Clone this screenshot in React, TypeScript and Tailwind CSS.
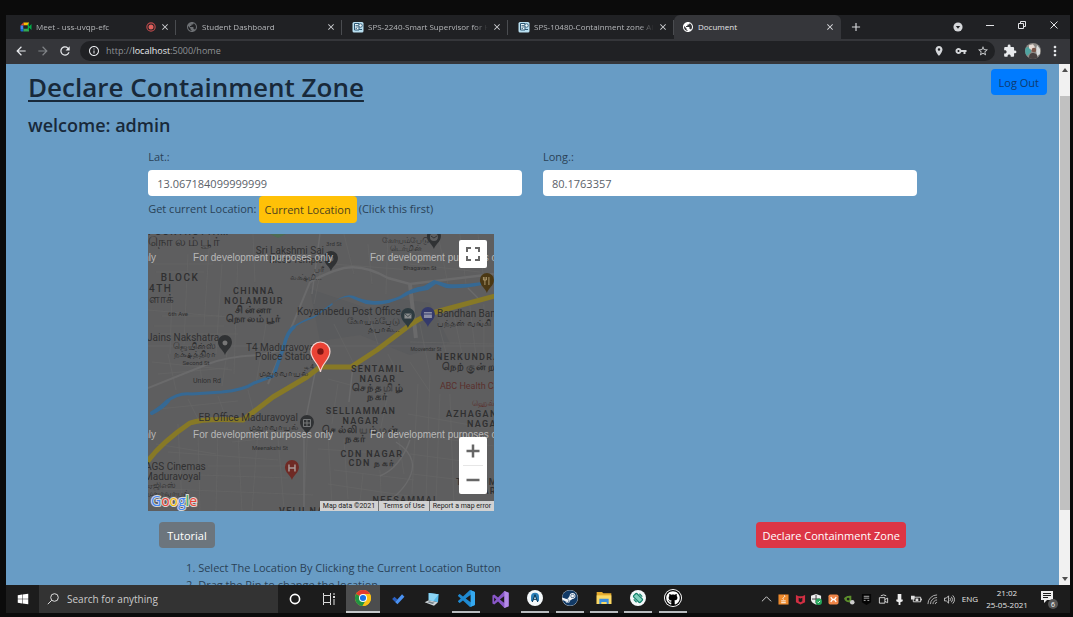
import React from "react";
import {
  MdAdd,
  MdArrowBack,
  MdArrowForward,
  MdClose,
  MdExtension,
  MdInfoOutline,
  MdLocationOn,
  MdMoreVert,
  MdPublic,
  MdRefresh,
  MdStarBorder,
  MdVpnKey,
} from "react-icons/md";
import { FaGithub, FaSteam, FaWindows } from "react-icons/fa";

/* ---------- Browser chrome ---------- */

function MeetIcon() {
  return (
    <svg viewBox="0 0 24 24" className="size-3 shrink-0">
      <path d="M7 3h11v6H7z" fill="#fbbc04" />
      <path d="M1 9l6-6v6z" fill="#ea4335" />
      <path d="M1 9h6v7H1z" fill="#4285f4" />
      <path d="M1 16h6v5H3a2 2 0 0 1-2-2z" fill="#1967d2" />
      <path d="M7 15h11v6H7z" fill="#34a853" />
      <path d="M17 4l1 1v14l-3-2V8zM17 12l6-6v12z" fill="#00ac47" />
      <path d="M7 9h8v6H7z" fill="#202124" />
    </svg>
  );
}

function DocIcon() {
  return (
    <svg viewBox="0 0 24 24" className="size-3 shrink-0">
      <rect x="1" y="2" width="22" height="21" rx="3" fill="#b9dff0" />
      <path d="M5 5h9v13H5z" fill="#eef8fc" stroke="#2d5874" strokeWidth="2" />
      <path d="M7 9h5M7 12h6M7 15h3" stroke="#2d5874" strokeWidth="1.6" />
      <circle cx="17" cy="9" r="3.5" fill="#eef8fc" stroke="#2d5874" strokeWidth="1.8" />
      <path d="M14 17h6" stroke="#2d5874" strokeWidth="2" />
    </svg>
  );
}

type TabInfo = { title: string; icon: React.ReactNode; recording?: boolean };

const tabs: TabInfo[] = [
  { title: "Meet - uss-uvqp-efc", icon: <MeetIcon />, recording: true },
  { title: "Student Dashboard", icon: <MdPublic className="size-3 shrink-0 text-[#6d7074]" /> },
  { title: "SPS-2240-Smart Supervisor for H", icon: <DocIcon /> },
  { title: "SPS-10480-Containment zone Al", icon: <DocIcon /> },
];

function TabStrip() {
  return (
    <div className="flex h-6 items-stretch bg-[#202124] text-[8px] text-[#b4b6b9]">
      <div className="w-1" />
      {tabs.map((t) => (
        <div
          key={t.title}
          className="flex min-w-0 flex-[0_1_166px] items-center gap-1 bg-[linear-gradient(#4a4c50,#4a4c50)] bg-[length:1px_15px] bg-[position:right_center] bg-no-repeat pr-1.5 pl-2.5"
        >
          {t.icon}
          <button className="min-w-0 flex-1 overflow-hidden text-left whitespace-nowrap [mask-image:linear-gradient(to_right,black_88%,transparent)]">
            {t.title}
          </button>
          {t.recording && (
            <svg viewBox="0 0 12 12" className="size-2.5 shrink-0">
              <circle cx="6" cy="6" r="5" fill="none" stroke="#b8484a" strokeWidth="1.4" />
              <circle cx="6" cy="6" r="3" fill="#e0605c" />
            </svg>
          )}
          <button aria-label="Close tab" className="shrink-0 text-[#d5d7da]">
            <MdClose className="size-2.5" />
          </button>
        </div>
      ))}
      <div className="flex min-w-0 flex-[0_1_167px] items-center gap-1 rounded-t-md bg-[#35363a] pr-1.5 pl-2 text-[#e2e3e6]">
        <MdPublic className="size-3 shrink-0 text-white" />
        <button className="min-w-0 flex-1 text-left whitespace-nowrap">Document</button>
        <button aria-label="Close tab" className="shrink-0">
          <MdClose className="size-2.5" />
        </button>
      </div>
      <button aria-label="New tab" className="ml-2 text-[#d5d7da]">
        <MdAdd className="size-3.5" />
      </button>
      <div className="ml-auto flex items-center text-[#e2e3e6]">
        <button aria-label="Search tabs" className="flex w-8 justify-center">
          <svg viewBox="0 0 12 12" className="size-2.5">
            <circle cx="6" cy="6" r="5.5" fill="#d5d7da" />
            <path d="M3.4 4.8h5.2L6 8z" fill="#202124" />
          </svg>
        </button>
        <button aria-label="Minimize" className="flex w-8 justify-center pb-1">
          <svg viewBox="0 0 10 10" className="size-2.5">
            <path d="M1 5.5h8" stroke="currentColor" />
          </svg>
        </button>
        <button aria-label="Restore" className="flex w-8 justify-center pb-1">
          <svg viewBox="0 0 10 10" className="size-2.5" fill="none" stroke="currentColor">
            <path d="M1.5 3.5h5v5h-5z M3.5 3V1.5h5v5H7" />
          </svg>
        </button>
        <button aria-label="Close window" className="flex w-8 justify-center pb-1">
          <svg viewBox="0 0 10 10" className="size-2.5" stroke="currentColor">
            <path d="M1.5 1.5l7 7M8.5 1.5l-7 7" />
          </svg>
        </button>
      </div>
    </div>
  );
}

function Toolbar() {
  return (
    <div className="flex h-[25px] items-center bg-[#35363a] pb-0.5 text-[#e8eaed]">
      <button aria-label="Back" className="ml-2">
        <MdArrowBack className="size-3.5" />
      </button>
      <button aria-label="Forward" className="ml-2 text-[#808387]">
        <MdArrowForward className="size-3.5" />
      </button>
      <button aria-label="Reload" className="ml-2">
        <MdRefresh className="size-3.5" />
      </button>
      <div className="ml-2 flex h-5 flex-1 items-center rounded-full bg-[#202124] pr-1.5 pl-2">
        <MdInfoOutline className="size-3" />
        <div
          role="textbox"
          aria-label="Address"
          className="ml-1.5 flex-1 text-[9px] text-[#8f9296]"
        >
          http://<span className="text-[#e8eaed]">localhost</span>:5000/home
        </div>
        <div className="flex items-center gap-2.5 text-[#d5d7da]">
          <MdLocationOn className="size-3" />
          <MdVpnKey className="size-3" />
          <MdStarBorder className="size-3" />
        </div>
      </div>
      <button aria-label="Extensions" className="ml-2">
        <MdExtension className="size-3.5" />
      </button>
      <button aria-label="Profile" className="ml-2">
        <svg viewBox="0 0 16 16" className="size-4">
          <circle cx="8" cy="8" r="8" fill="#8d8a86" />
          <path d="M1 4.5A8 8 0 0 0 2 13l4-4-1-5z" fill="#4fa3a0" />
          <path d="M4 2.200l4-1 2 3-3 3-3-2z" fill="#e9dcd4" />
          <path d="M12 2l3 4v5l-3 2-1-6z" fill="#d9dcdc" />
          <circle cx="9" cy="7" r="2.300" fill="#7a5548" />
          <path d="M4 15c0-4 2-5 4-5s5 1 4 5c-3 1.500-6 1-8 0z" fill="#47403f" />
        </svg>
      </button>
      <button aria-label="Menu" className="mr-[7px] ml-1.5">
        <MdMoreVert className="size-4" />
      </button>
    </div>
  );
}

function Scrollbar() {
  return (
    <div className="flex w-[11px] shrink-0 flex-col items-center bg-[#f1f1f1] py-1 text-[#505050]">
      <svg viewBox="0 0 6 4" className="h-1 w-1.5">
        <path d="M0 4l3-4 3 4z" fill="currentColor" />
      </svg>
      <div className="mt-6 w-2.5 flex-[412] bg-[#c1c1c1]" />
      <div className="flex-[67]" />
      <svg viewBox="0 0 6 4" className="h-1 w-1.5">
        <path d="M0 0l3 4 3-4z" fill="currentColor" />
      </svg>
    </div>
  );
}

/* ---------- Map ---------- */

type Label = { x: number; y: number; t: string; s?: number; a?: "start" | "end"; c?: string; w?: number; caps?: boolean };

const labels: Label[] = [
  { x: 0, y: 1, t: "POONTHOTTAM", s: 9, a: "start", w: 500, caps: true },
  { x: 0, y: 12, t: "நொலம்பூர்", s: 13, a: "start", w: 500, caps: true },
  { x: 142, y: 20, t: "Sri Lakshmi Sai", s: 10 },
  { x: 148, y: 29, t: "Bless Temple", s: 9 },
  { x: 176, y: 38, t: "பரீ", s: 8, a: "end" },
  { x: 174, y: 46, t: "லக்ஷ்மி...", s: 8, a: "end" },
  { x: 32, y: 47, t: "BLOCK", s: 10, w: 500, caps: true },
  { x: 1, y: 58, t: "4TH", s: 10, a: "start", w: 500, caps: true },
  { x: 1, y: 69, t: "ளாக்", s: 12, a: "start", w: 500 },
  { x: 106, y: 60, t: "CHINNA", s: 9, w: 600, caps: true },
  { x: 106, y: 70, t: "NOLAMBUR", s: 9, w: 600, caps: true },
  { x: 106, y: 79, t: "சின்னா", s: 10, w: 600, caps: true },
  { x: 106, y: 88, t: "நொலம்பூர்", s: 10, w: 600, caps: true },
  { x: 30, y: 82, t: "6th Ave", s: 6 },
  { x: 201, y: 81, t: "Koyambedu Post Office", s: 10 },
  { x: 252, y: 90, t: "கோயம்பேடு", s: 9, a: "end" },
  { x: 252, y: 98, t: "தபால்...", s: 9, a: "end" },
  { x: 289, y: 83, t: "Bandhan Bank", s: 10, a: "start" },
  { x: 289, y: 92, t: "பந்தன் வங்கி", s: 9, a: "start" },
  { x: -1, y: 107, t: "Jains Nakshatra", s: 10, a: "start" },
  { x: 68, y: 115, t: "ஜெயின்ஸ்", s: 9, a: "end" },
  { x: 68, y: 123, t: "நக்ஷத்திரா", s: 9, a: "end" },
  { x: 48, y: 131, t: "Second St", s: 6 },
  { x: 98, y: 117, t: "T4 Maduravoyal", s: 10, a: "start" },
  { x: 107, y: 126, t: "Police Station", s: 10, a: "start" },
  { x: 166, y: 135, t: "டி4", s: 7, a: "end" },
  { x: 160, y: 142, t: "மதுரவாயல்", s: 9, a: "end" },
  { x: 59, y: 149, t: "Union Rd", s: 7 },
  { x: 258, y: 9, t: "கோயம்பேடு", s: 8 },
  { x: 258, y: 17, t: "டெர்மின்", s: 8 },
  { x: 186, y: 12, t: "3rd St", s: 6 },
  { x: 272, y: 36, t: "Bhagavan St", s: 6 },
  { x: 278, y: 117, t: "Moovendar St", s: 5 },
  { x: 288, y: 126, t: "NERKUNDRAM", s: 9, a: "start", w: 600, caps: true },
  { x: 294, y: 136, t: "நெற்குன்றம்", s: 10, a: "start", w: 600, caps: true },
  { x: 230, y: 138, t: "SENTAMIL", s: 9, w: 600, caps: true },
  { x: 230, y: 148, t: "NAGAR", s: 9, w: 600, caps: true },
  { x: 230, y: 157, t: "செந்தமிழ்", s: 10, w: 600, caps: true },
  { x: 230, y: 166, t: "நகர்", s: 10, w: 600, caps: true },
  { x: 292, y: 155, t: "ABC Health Care", s: 9, a: "start", c: "#5a302d" },
  { x: 324, y: 172, t: "ஹெல்த்", s: 8, a: "start", c: "#5a302d" },
  { x: 213, y: 180, t: "SELLIAMMAN", s: 9, w: 600, caps: true },
  { x: 213, y: 190, t: "NAGAR", s: 9, w: 600, caps: true },
  { x: 213, y: 199, t: "செல்லியம்மன்", s: 10, w: 600, caps: true },
  { x: 208, y: 208, t: "நகர்", s: 10, w: 600, caps: true },
  { x: 298, y: 183, t: "AZHAGANAR", s: 9, a: "start", w: 600, caps: true },
  { x: 319, y: 193, t: "NAGAR", s: 9, a: "start", w: 600, caps: true },
  { x: 150, y: 187, t: "EB Office Maduravoyal", s: 10, a: "end" },
  { x: 150, y: 196, t: "மதுரவாயல்", s: 9, a: "end" },
  { x: 122, y: 216, t: "Meenakshi St", s: 6 },
  { x: 224, y: 223, t: "CDN NAGAR", s: 9, w: 600, caps: true },
  { x: 224, y: 232, t: "CDN நகர்", s: 9, w: 600, caps: true },
  { x: -3, y: 236, t: "AGS Cinemas", s: 10, a: "start" },
  { x: -4, y: 246, t: "Maduravoyal", s: 10, a: "start" },
  { x: -1, y: 254, t: "ஏஜிஎஸ்", s: 8, a: "start" },
  { x: -1, y: 262, t: "மதுரவாயல்", s: 8, a: "start" },
  { x: 308, y: 251, t: "THIRUMAL", s: 9, a: "start", w: 600, caps: true },
  { x: 312, y: 260, t: "NAGAR", s: 9, a: "start", w: 600, caps: true },
  { x: 258, y: 269, t: "NEESAMMAL", s: 9, w: 500, caps: true },
  { x: 131, y: 280, t: "VELU NAGAR", s: 9, a: "start", w: 600, caps: true },
];

const riverUpper =
  "M180 73Q190 63 201 63Q210 67 218 70Q230 72 241 69Q252 66 262 60Q272 57 280 56L288 50L298 54Q315 55 334 51V48Q315 51 300 50L286 46L276 52Q262 54 252 62Q242 67 226 67Q214 66 206 62Q196 58 180 73Z";

function Pin({ x, y, fill, children }: { x: number; y: number; fill: string; children?: React.ReactNode }) {
  return (
    <g transform={`translate(${x} ${y})`}>
      <path d="M0 12C-1.500 7-7 5-7-1a7 7 0 0 1 14 0C7 5 1.500 7 0 12z" fill={fill} />
      {children}
    </g>
  );
}

function MapCanvas() {
  return (
    <svg viewBox="0 0 346 277" className="block h-full w-full bg-[#5e5e5f] font-[Roboto,'Noto_Sans',sans-serif]">
      <path d="M122 0h16l-8 4z" fill="#4f6b52" />
      <path d="M162 55l60 20 30-10 30 4 20 40-40 12-50-20-40 6z" fill="#5a5b5d" />
      <g stroke="#656566" strokeWidth="0.7" fill="none">
        <path d="M5 30h60M8 38h48M6 92h70M10 100h80M14 82h60M0 76l92 8M62 0l-6 92M40 20l-4 90M74 30l-6 90M90 20l-4 120M24 60l-2 60M105 0l2 48M118 90l-10 60" />
        <path d="M8 210l60 10M20 218l110 8M30 190l4 80M50 198l2 79M70 196l-2 81M90 200l4 77M110 196l-6 81M20 240l120 4M15 255l150 6M84 208l60-6M160 190l-4 80M130 204l6 70M60 232h90" />
        <path d="M180 200l4 70M196 205l4 60M215 240l-4 37M232 236l2 40M250 200l6 40M180 250l80 12M170 215l60 4M186 236l80 10M270 150l-6 110M282 140l-4 130M292 160l-4 110M302 160l4 110M260 180l80 14M262 200l84 12M262 220l60 8M264 240l50 6" />
        <path d="M176 20l-10 50M196 0l10 40M220 10l4 40M240 0l-2 60M255 15l80 14M262 30l70 8M290 0l10 50M312 0l6 50M330 0l6 46M184 30l80 6M186 90l20 40M220 80l10 30M272 90l10 50M290 88l8 30M306 80l8 40M322 72l6 50M336 70v50M262 108l84 2M262 128l20 30M240 120l10 20" />
        <path d="M4 128l80 8M10 140l70-6M20 120l8 36M50 118l4 30M80 112l-6 40M10 175l80-8M40 165l10 20M70 162l8 22M100 156l6 24M180 145l60 16M190 150l-6 40M240 160l-8 38" />
      </g>
      <g stroke="#6a6a6b" fill="none">
        <path d="M0 154Q40 138 60 130T112 121L150 112" strokeWidth="2" />
        <path d="M162 48Q180 38 196 34Q216 30 240 44L262 50L346 40" strokeWidth="2.500" />
        <path d="M262 50l4 36 2 18" strokeWidth="4" />
        <path d="M162 48L144 92 120 150" strokeWidth="2" />
        <path d="M0 112H346" strokeWidth="0.600" />
        <path d="M172 0L164 60M168 134l-12 60 0 83M205 132l-4 36M262 206q-10 28-30 36M320 54l10 10" strokeWidth="1.500" />
        <path d="M248 208Q275 225 258 250T205 277" strokeWidth="1.300" />
      </g>
      <g fill="none" stroke="#366994" strokeLinecap="round" strokeLinejoin="round">
        <path d="M4 179Q14 172 18 168Q30 158 44 160L74 158Q96 156 106 149L125 142" strokeWidth="3" />
        <path d="M4 179Q14 174 20 167" strokeWidth="4" />
        <path d="M127 138L136 112Q139 98 146 93" strokeWidth="3.500" />
        <path d="M146 93Q152 88 166 83L184 70" strokeWidth="1.500" />
      </g>
      <path d={riverUpper} fill="#366994" />
      <path
        d="M-1 228Q14 208 42 189Q56 184 95 186L125 163L159 143L172 133H203L229 116L262 91Q278 80 295 76L347 62"
        fill="none"
        stroke="#877926"
        strokeWidth="5"
        strokeLinejoin="round"
      />
      <g fill="#303031">
        {labels.map((l, i) => (
          <text
            key={i}
            x={l.x}
            y={l.y}
            fontSize={l.s}
            fontWeight={l.w}
            fill={l.c}
            textAnchor={l.a ?? "middle"}
            className={l.caps ? "tracking-[0.15em]" : undefined}
          >
            {l.t}
          </text>
        ))}
      </g>
      <Pin x={183} y={25} fill="#303234">
        <circle r="2.500" fill="#5e5e5f" />
      </Pin>
      <Pin x={286} y={3} fill="#303234">
        <circle r="4" fill="#5e5e5f" />
        <path d="M-3-1l3 2 3-2" fill="none" stroke="#303234" />
      </Pin>
      <Pin x={77} y={109} fill="#303234">
        <circle r="2.500" fill="#777" />
      </Pin>
      <Pin x={260} y={82} fill="#2e3b40">
        <path d="M-3.500-2.500h7v5h-7z" fill="#8a8d8e" />
        <path d="M-3.500-2.500L0 .5l3.500-3" fill="none" stroke="#2e3b40" strokeWidth=".8" />
      </Pin>
      <Pin x={280} y={81} fill="#343a6b">
        <path d="M-4-3h8v6h-8z" fill="#8b8ea6" />
        <path d="M-4-1h8" stroke="#343a6b" />
      </Pin>
      <Pin x={339} y={47} fill="#4b3814">
        <path d="M-2-4v8M2-4v8M-3.500-4v3h3v-3" fill="none" stroke="#a9956a" />
      </Pin>
      <Pin x={159} y={189} fill="#303234">
        <path d="M-3.500-3.500h7v7h-7zM0-3.500v7M-3.500 0h7" fill="none" stroke="#77797a" />
      </Pin>
      <Pin x={144} y={234} fill="#6f2a25">
        <path d="M-3-3.500v7M3-3.500v7M-3 0h6" fill="none" stroke="#a89896" strokeWidth="1.500" />
      </Pin>
      <g fontSize="10" fill="#b8b8b8" textAnchor="middle" className="font-['Liberation_Sans',sans-serif]">
        {[27, 204].map((y) =>
          [-62, 115, 292].map((x) => (
            <text key={`${x}-${y}`} x={x} y={y}>
              For development purposes only
            </text>
          )),
        )}
      </g>
      <g transform="translate(172.500 119)">
        <path
          d="M0 19C-1.500 10-9.500 7-9.500-1.500a9.500 9.500 0 0 1 19 0C9.500 7 1.500 10 0 19z"
          fill="#ea4335"
          stroke="#f6d6d2"
          strokeWidth="1.200"
        />
        <circle cy="-1.500" r="3.200" fill="#7d1512" />
      </g>
      <text
        x="3"
        y="272"
        fontSize="14"
        fontWeight="500"
        stroke="#d8d8d8"
        strokeWidth="2"
        paintOrder="stroke"
        className="font-['Open_Sans',sans-serif]"
      >
        <tspan fill="#4285f4">G</tspan>
        <tspan fill="#ea4335">o</tspan>
        <tspan fill="#fbbc04">o</tspan>
        <tspan fill="#4285f4">g</tspan>
        <tspan fill="#34a853">l</tspan>
        <tspan fill="#ea4335">e</tspan>
      </text>
    </svg>
  );
}

function LocationMap() {
  return (
    <div className="relative mt-[11px] h-[277px] w-[45%] overflow-hidden">
      <MapCanvas />
      <button
        aria-label="Toggle fullscreen"
        className="absolute top-1.5 right-[7px] flex size-7 items-center justify-center rounded-xs bg-white"
      >
        <svg viewBox="0 0 14 14" className="size-3.5" fill="none" stroke="#666" strokeWidth="2">
          <path d="M1 5V1h4M9 1h4v4M13 9v4H9M5 13H1V9" />
        </svg>
      </button>
      <div className="absolute right-[7px] bottom-[17px] flex w-7 flex-col items-center rounded-xs bg-white">
        <button aria-label="Zoom in" className="flex h-7 w-full items-center justify-center">
          <svg viewBox="0 0 14 14" className="size-3.5" stroke="#666" strokeWidth="2.500">
            <path d="M0.500 7h13M7 .5v13" />
          </svg>
        </button>
        <div className="h-px w-5 bg-[#e6e6e6]" />
        <button aria-label="Zoom out" className="flex h-7 w-full items-center justify-center">
          <svg viewBox="0 0 14 14" className="size-3.5" stroke="#666" strokeWidth="2.500">
            <path d="M0.500 7h13" />
          </svg>
        </button>
      </div>
      <div className="absolute right-0 bottom-0 flex h-2.5 items-center divide-x divide-[#777] bg-[#d2d2d2] font-[Roboto,sans-serif] text-[7px] leading-[10px] whitespace-nowrap text-[#222]">
        <span className="px-[3px]">Map data ©2021</span>
        <a href="#terms" className="px-1">
          Terms of Use
        </a>
        <a href="#report" className="px-[3px]">
          Report a map error
        </a>
      </div>
    </div>
  );
}

/* ---------- Page ---------- */

function CoordinateField({ id, label, value }: { id: string; label: string; value: string }) {
  return (
    <div className="min-w-0 flex-1">
      <label htmlFor={id} className="mb-[5px] block">
        {label}
      </label>
      <input
        id={id}
        defaultValue={value}
        className="block h-[26px] w-full rounded-sm bg-white px-[9px] text-[#5a6169]"
      />
    </div>
  );
}

function Page() {
  return (
    <main className="min-w-0 flex-1 overflow-hidden bg-[#689cc5] text-[11px] leading-[17px] text-[#2a4257]">
      <div className="flex items-start justify-between pt-[5px] pr-3 pl-[22px] text-[#18293a]">
        <div>
          <h1 className="text-[26px] leading-9 font-semibold underline decoration-2 underline-offset-3">
            Declare Containment Zone
          </h1>
          <h2 className="mt-2 text-[18px] leading-6 font-semibold">welcome: admin</h2>
        </div>
        <button className="h-[26px] rounded-sm bg-[#007bff] px-2 text-[#0f3a70]">Log Out</button>
      </div>
      <div className="mx-auto mt-[11px] w-[73%]">
        <div className="flex gap-[21px]">
          <CoordinateField id="lat" label="Lat.:" value="13.067184099999999" />
          <CoordinateField id="long" label="Long.:" value="80.1763357" />
        </div>
        <div className="flex items-start gap-0.5">
          <span className="pt-1">Get current Location:</span>
          <button className="h-[27px] rounded-sm bg-[#ffc107] px-1.5 text-[#4d431f]">Current Location</button>
          <span className="pt-1">(Click this first)</span>
        </div>
        <LocationMap />
        <div className="mt-[11px] flex justify-between px-[11px] text-white">
          <button className="h-[26px] rounded-sm bg-[#6c757d] px-2">Tutorial</button>
          <button className="h-[26px] rounded-sm bg-[#dc3545] px-1.5">Declare Containment Zone</button>
        </div>
        <ol className="mt-[11px] list-decimal pl-[50px]">
          <li>Select The Location By Clicking the Current Location Button</li>
          <li>Drag the Pin to change the location</li>
        </ol>
      </div>
    </main>
  );
}

/* ---------- Taskbar ---------- */

const ChromeLogo = (
  <svg viewBox="0 0 24 24" className="size-4">
    <circle cx="12" cy="12" r="12" fill="#fbc116" />
    <path d="M12 12L1.600 6A12 12 0 0 1 22.400 6z" fill="#e33b2e" />
    <path d="M12 12L1.600 6A12 12 0 0 0 11 24l5.500-9z" fill="#229342" />
    <path d="M12 6h10.400A12 12 0 0 1 12 24l5-9z" fill="#fbc116" />
    <circle cx="12" cy="12" r="6" fill="#fff" />
    <circle cx="12" cy="12" r="4.600" fill="#1a73e8" />
  </svg>
);
const TodoLogo = (
  <svg viewBox="0 0 24 24" className="size-3.5">
    <path d="M2 12l4-4 5 5-4 4z" fill="#2b5fc0" />
    <path d="M7 17L19 4l4 4L11 21z" fill="#4a92f2" />
  </svg>
);
const LaptopLogo = (
  <svg viewBox="0 0 24 24" className="size-4">
    <path d="M7 3l15 2-1 12-14-3z" fill="#56b9ea" />
    <path d="M7 3l15 2-8 10-7-1z" fill="#8cd5f5" />
    <path d="M1 17l6-3 14 3-6 5z" fill="#cfd6da" />
    <path d="M5 17l3-1.500 8 2-3 2z" fill="#76838b" />
  </svg>
);
const CodeLogo = (
  <svg viewBox="0 0 24 24" className="size-[17px]">
    <path
      d="M23.150 2.587L18.210.21a1.494 1.494 0 0 0-1.705.29l-9.460 8.630-4.120-3.128a.999.999 0 0 0-1.276.057L.327 7.261A1 1 0 0 0 .326 8.740L3.899 12 .326 15.260a1 1 0 0 0 .001 1.479L1.650 17.940a.999.999 0 0 0 1.276.057l4.120-3.128 9.460 8.630a1.492 1.492 0 0 0 1.704.29l4.942-2.377A1.500 1.500 0 0 0 24 20.060V3.939a1.500 1.500 0 0 0-.85-1.352zm-5.146 14.861L10.826 12l7.178-5.448v10.896z"
      fill="#1f8ad2"
    />
    <path d="M18 .2l5.200 2.400a1.500 1.500 0 0 1 .8 1.300v16.200a1.500 1.500 0 0 1-.8 1.300L18 23.800z" fill="#35a8ee" />
  </svg>
);
const StudioLogo = (
  <svg viewBox="0 0 24 24" className="size-[17px]">
    <path
      d="M17.500 0L8.500 9.200 3.200 5 .6 6.200v11.600L3.200 19l5.300-4.200 9 9.200 6-2.500v-19zM3 15V9l3 3zm8-3l6.500-5v10z"
      fill="#8957c9"
      fillRule="evenodd"
    />
    <path d="M17.500 0l6 2.500v19l-6 2.500z" fill="#b38ae6" />
  </svg>
);
const AndroidStudioLogo = (
  <svg viewBox="0 0 24 24" className="size-4">
    <circle cx="12" cy="12" r="12" fill="#f4f8fa" />
    <path d="M6 17V10a6 6 0 0 1 12 0v7h-3l-3-8-3 8z" fill="#2b7fb8" />
    <path d="M8 18l4-11 4 11M10 14h4" fill="none" stroke="#0c3550" strokeWidth="1.500" />
  </svg>
);
const SteamLogo = (
  <span className="flex rounded-full bg-[#f2f5f8]">
    <FaSteam className="size-4 text-[#123a66]" />
  </span>
);
const ExplorerLogo = (
  <svg viewBox="0 0 24 24" className="size-4">
    <path d="M1 3h8l2 2h12v16H1z" fill="#e5ab2f" />
    <path d="M1 8h22v13H1z" fill="#fbd966" />
    <path d="M5 13h14v8h-3v-3H8v3H5z" fill="#3c8ede" />
  </svg>
);
const EmulatorLogo = (
  <svg viewBox="0 0 24 24" className="size-4">
    <circle cx="12" cy="12" r="12" fill="#f4f8fa" />
    <g transform="rotate(-45 12 12)" fill="none" stroke="#11806a" strokeWidth="1.800">
      <rect x="8.500" y="5" width="7" height="14" rx="1.500" fill="#7fd0bd" />
      <path d="M6 9v6M18 9v6" />
    </g>
  </svg>
);
const GithubLogo = (
  <span className="flex rounded-full bg-black p-px ring-1 ring-white">
    <FaGithub className="size-3.5 text-white" />
  </span>
);

const apps = [
  { name: "Chrome", logo: ChromeLogo, state: "active" },
  { name: "To Do", logo: TodoLogo, state: "idle" },
  { name: "Remote Desktop", logo: LaptopLogo, state: "idle" },
  { name: "Code", logo: CodeLogo, state: "open" },
  { name: "Visual Studio", logo: StudioLogo, state: "idle" },
  { name: "Android Studio", logo: AndroidStudioLogo, state: "open" },
  { name: "Steam", logo: SteamLogo, state: "open" },
  { name: "File Explorer", logo: ExplorerLogo, state: "open" },
  { name: "Emulator", logo: EmulatorLogo, state: "open" },
  { name: "GitHub Desktop", logo: GithubLogo, state: "open" },
];

const cell = {
  active: "border-b-2 border-[#c6c8ca] bg-[#4c4d4e]",
  open: "",
  idle: "",
} as Record<string, string>;

const trayIcons: { name: string; art: React.ReactNode }[] = [
  { name: "Show hidden icons", art: <path d="M1 8l5-5 5 5" fill="none" stroke="#ddd" /> },
  {
    name: "Java",
    art: (
      <>
        <rect x=".5" y=".5" width="11" height="11" fill="#ee8a2c" />
        <path d="M7 1.500c2 2-3.500 2.500-1 4.500M3.500 7.500h5M3.500 9.500h5" fill="none" stroke="#fff" />
      </>
    ),
  },
  {
    name: "McAfee",
    art: <path d="M1 1l3 1.500h4L11 1v8l-5 2.500L1 9z M4 4v4l2 1 2-1V4L6 5z" fill="#d22f43" fillRule="evenodd" />,
  },
  {
    name: "Windows Security",
    art: (
      <>
        <path d="M5.500 0L11 2v4c0 3-3 4.500-5.500 5.500C3 10.500 0 9 0 6V2z" fill="#eee" />
        <path d="M5.500 1v9M1 5.500h9" stroke="#333" />
        <circle cx="8.500" cy="8.500" r="3.500" fill="#23a559" />
        <path d="M7 8.500l1 1 2-2" fill="none" stroke="#fff" />
      </>
    ),
  },
  {
    name: "XAMPP",
    art: (
      <>
        <rect x=".5" y=".5" width="11" height="11" rx="2" fill="#ef8547" />
        <path d="M3 3.500l2 2.500-2 2.500M9 3.500L7 6l2 2.500M5 6h2" fill="none" stroke="#fff" strokeWidth="1.400" />
      </>
    ),
  },
  {
    name: "NVIDIA",
    art: (
      <>
        <path d="M0 5c2-3 5-3 8-3v7H5C3 9 1 8 0 5z" fill="#5c8f2c" />
        <circle cx="4.500" cy="5.500" r="1.500" fill="#1c1c1c" />
        <circle cx="9" cy="9" r="2.500" fill="#ccc" />
      </>
    ),
  },
  {
    name: "Epic Games",
    art: (
      <>
        <path d="M1 0h10v9l-5 3-5-3z" fill="#050505" />
        <path d="M3 2.500h6M3 4.500h6M3 7h2M7 7h2" stroke="#bbb" />
      </>
    ),
  },
  {
    name: "Meet Now",
    art: <path d="M1.500 4h6v6h-6zM7.500 6l3-1.500v5l-3-1.500M3 2q3-2 6 0" fill="none" stroke="#ddd" />,
  },
  { name: "Microphone", art: <path d="M4 0h4v7H4zM2.500 6h7v2L7 9v3H5V9L2.500 8z" fill="#eee" /> },
  {
    name: "Battery",
    art: (
      <>
        <path d="M2.500 3.500h8v5h-8zM11.500 5v2" fill="none" stroke="#ddd" />
        <path d="M0 2h4v4H0zM5 5h3v2.500H5z" fill="#ddd" />
      </>
    ),
  },
  {
    name: "Network",
    art: (
      <path
        d="M1 11A10 10 0 0 1 11 1M3.800 11A7.200 7.200 0 0 1 11 3.800M6.500 11A4.500 4.500 0 0 1 11 6.500M9 11a2 2 0 0 1 2-2"
        fill="none"
        stroke="#ccc"
        strokeWidth=".9"
      />
    ),
  },
  {
    name: "Volume",
    art: <path d="M.5 4.500h2l2.500-2.500v8L2.500 7.500h-2zM6.500 4.500q1.500 1.500 0 3M8 3q3 3 0 6M9.500 1.500q4 4.500 0 9" fill="none" stroke="#ddd" strokeWidth=".9" />,
  },
];

function Taskbar() {
  return (
    <footer className="flex h-7 shrink-0 items-stretch bg-[#1c1c1c] text-[#e4e4e4]">
      <button aria-label="Start" className="flex w-[33px] items-center justify-center text-white">
        <FaWindows className="size-3" />
      </button>
      <label className="flex w-[239px] min-w-0 items-center gap-2 bg-[#333333] pl-2">
        <svg viewBox="0 0 12 12" className="size-3 shrink-0" fill="none" stroke="#ddd">
          <circle cx="7.500" cy="4.500" r="3.800" />
          <path d="M4.800 7.200L.8 11.200" />
        </svg>
        <input
          aria-label="Search"
          placeholder="Search for anything"
          className="w-full min-w-0 bg-transparent text-[10px] outline-none placeholder:text-[#cccccc]"
        />
      </label>
      <button aria-label="Cortana" className="flex w-[34px] items-center justify-center">
        <svg viewBox="0 0 12 12" className="size-3">
          <circle cx="6" cy="6" r="4.600" fill="none" stroke="#fff" strokeWidth="1.600" />
        </svg>
      </button>
      <button aria-label="Task view" className="flex w-[34px] items-center justify-center">
        <svg viewBox="0 0 14 12" className="h-3 w-3.5" fill="none" stroke="#ddd">
          <path d="M1.500 0v2.500h7V0M1.500 2.500v7M8.500 2.500v7M1.500 12V9.500h7V12M12 0v2M12 6v6" />
          <path d="M12 3v2" strokeWidth="2" />
        </svg>
      </button>
      <div className="flex w-[344px] min-w-0">
        {apps.map((a) => (
          <button
            key={a.name}
            aria-label={a.name}
            className={`flex flex-1 flex-col items-center justify-between ${cell[a.state]}`}
          >
            <span className="flex flex-1 items-center">{a.logo}</span>
            {a.state === "open" && <span className="h-0.5 w-7 bg-[#b9bcbf]" />}
          </button>
        ))}
      </div>
      <div className="ml-auto flex items-center">
        <div className="flex w-[199px]">
          {trayIcons.map((t) => (
            <button key={t.name} aria-label={t.name} className="flex flex-1 justify-center">
              <svg viewBox="0 0 12 12" className="size-[11px]">
                {t.art}
              </svg>
            </button>
          ))}
        </div>
        <button className="ml-1 text-[8px]">ENG</button>
        <button className="ml-1.5 flex w-[46px] flex-col items-center text-[8px] leading-[12px] whitespace-nowrap">
          <span>21:02</span>
          <span>25-05-2021</span>
        </button>
        <button aria-label="6 notifications" className="relative mr-3 ml-2.5 flex h-5 w-4.5 items-start pt-0.5">
          <svg viewBox="0 0 14 12" className="h-3 w-3.5">
            <path d="M1 0h12v9H7l-3 3V9H1z" fill="#eee" />
            <path d="M3 2.500h8M3 4.500h8M3 6.500h5" stroke="#1c1c1c" />
          </svg>
          <span className="absolute right-0 bottom-0 flex size-2.5 items-center justify-center rounded-full bg-[#555] text-[7px] leading-none text-white">
            6
          </span>
        </button>
      </div>
    </footer>
  );
}

export default function App() {
  return (
    <div className="flex h-screen flex-col bg-[#0b0b0b] pt-[15px] pr-[3px] pb-1 pl-1.5 font-['Open_Sans','Noto_Sans',sans-serif]">
      <TabStrip />
      <Toolbar />
      <div className="flex min-h-0 flex-1">
        <Page />
        <Scrollbar />
      </div>
      <Taskbar />
    </div>
  );
}
